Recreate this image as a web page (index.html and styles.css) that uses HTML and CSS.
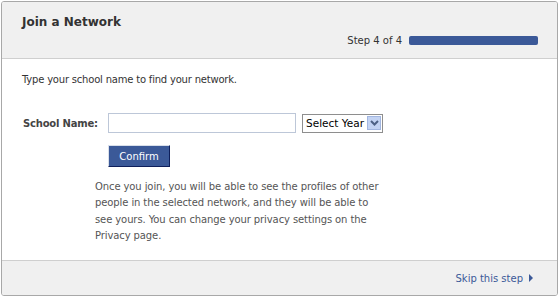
FILE: index.html
```html
<!DOCTYPE html>
<html lang="en">
<head>
    <meta charset="UTF-8">
    <title>Join a Network</title>
    <link rel="stylesheet" href="styles.css">
</head>
<body>
    <div class="dialog">
        <div class="dialog-head">
            <h2 class="dialog-title">Join a Network</h2>
            <div class="step">
                <span class="step-label">Step 4 of 4</span>
                <span class="step-bar"><span class="step-fill"></span></span>
            </div>
        </div>

        <div class="dialog-body">
            <p class="intro">Type your school name to find your network.</p>

            <form class="network-form" autocomplete="off">
                <div class="form-row">
                    <label for="school" class="form-label">School Name:</label>
                    <input type="text" id="school" class="form-input">
                    <div class="fake-select">
                        <span class="fake-select-text">Select Year</span>
                        <span class="fake-select-btn">
                            <svg width="9" height="6" viewBox="0 0 9 6"><path d="M1 1 L4.5 4.5 L8 1" fill="none" stroke="#4d6185" stroke-width="2"/></svg>
                        </span>
                    </div>
                </div>
                <div class="form-actions">
                    <button type="button" class="btn">Confirm</button>
                </div>
                <p class="note">Once you join, you will be able to see the profiles of other people in the selected network, and they will be able to see yours. You can change your privacy settings on the Privacy page.</p>
            </form>
        </div>

        <div class="dialog-foot">
            <a href="#" class="skip">Skip this step <span class="skip-arrow"></span></a>
        </div>
    </div>
</body>
</html>
```

FILE: styles.css
```css
body { margin: 0; font-family: "DejaVu Sans", Verdana, sans-serif; font-size: 10px; color: #333; background: #fff; }
.dialog { width: 555px; height: 293px; margin: 1px 0 0 1px; border: 1px solid #a8a8a8; border-radius: 3px; display: flex; flex-direction: column; overflow: hidden; }
.dialog-head { height: 56px; background: #f0f0f0; border-bottom: 1px solid #cfcfcf; padding: 0 19px 0 20px; display: flex; flex-direction: column; }
.dialog-title { margin: 13px 0 0; font-size: 12px; font-weight: bold; color: #333; }
.step { margin-top: 6px; display: flex; justify-content: flex-end; align-items: center; }
.step-label { font-size: 10px; color: #333; margin-right: 7px; }
.step-bar { width: 129px; height: 9px; background: #dfe4ee; border-radius: 2px; }
.step-fill { display: block; width: 100%; height: 100%; background: #3b5998; border-radius: 2px; }
.dialog-body { flex: 1; padding: 0 20px; }
.intro { margin: 15px 0 0; color: #333; letter-spacing: -0.2px; }
.network-form { margin-top: 28px; }
.form-row { display: flex; align-items: center; }
.form-label { width: 86px; text-indent: 1px; font-weight: bold; color: #444; letter-spacing: -0.2px; }
.form-input { width: 182px; height: 18px; padding: 0 2px; margin: 0; border: 1px solid #bdc7d8; box-sizing: content-box; }
.fake-select { margin-left: 6px; height: 17px; width: 79px; border: 1px solid #8e8e8e; display: flex; align-items: center; background: #fff; }
.fake-select-text { flex: 1; padding-left: 3px; font-size: 10.5px; color: #000; white-space: nowrap; overflow: hidden; }
.fake-select-btn { width: 14px; height: 14px; margin-right: 1px; background: #c3d3f3; border: 1px solid #a2b6e0; box-sizing: border-box; display: flex; align-items: center; justify-content: center; }
.form-actions { margin: 12px 0 0 86px; }
.btn { height: 22px; width: 62px; padding: 0; background: #3b5998; color: #fff; border: 1px solid; border-color: #d9dfea #0e1f5b #0e1f5b #d9dfea; font-family: inherit; font-size: 10px; }
.note { margin: 12px 0 0 73px; width: 290px; line-height: 16.3px; color: #555; letter-spacing: -0.1px; }
.dialog-foot { height: 34px; background: #f0f0f0; border-top: 1px solid #cfcfcf; display: flex; justify-content: flex-end; align-items: center; padding-right: 24px; }
.skip { color: #3b5998; text-decoration: none; display: flex; align-items: center; }
.skip-arrow { margin-left: 6px; width: 0; height: 0; border-left: 4px solid #3b5998; border-top: 4px solid transparent; border-bottom: 4px solid transparent; }
```
